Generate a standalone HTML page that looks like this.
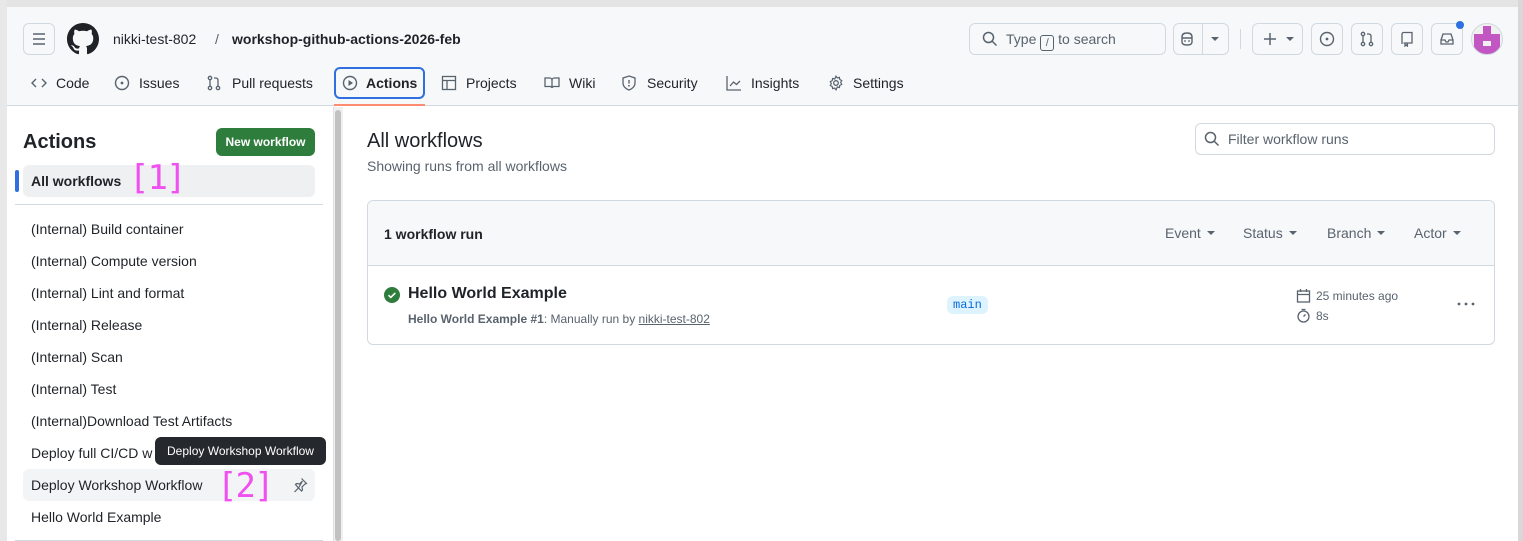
<!DOCTYPE html>
<html><head><meta charset="utf-8"><style>
*{box-sizing:border-box;margin:0;padding:0}
body{width:1523px;height:541px;overflow:hidden;background:#fff;font-family:"Liberation Sans",sans-serif;color:#1f2328;position:relative;font-size:14px}
.a{position:absolute;white-space:nowrap}
.btn{position:absolute;border:1px solid #d1d9e0;border-radius:6px;background:#f6f8fa}
svg{display:block}
.nav{position:absolute;top:75px;font-size:14px;color:#1f2328}
.wi{position:absolute;left:31px;font-size:14px;color:#1f2328}
.mag{position:absolute;color:#f050f0;font-family:"DejaVu Sans Mono","Liberation Mono",monospace;font-size:34px;line-height:40px;font-weight:200;letter-spacing:-2px}
.car{display:inline-block;width:0;height:0;border-left:4px solid transparent;border-right:4px solid transparent;border-top:4px solid #59636e;vertical-align:3px;margin-left:6px}
</style></head><body>
<div class="a" style="left:0;top:0;width:1523px;height:7px;background:#e4e4e4"></div>
<div class="a" style="left:0;top:0;width:7px;height:541px;background:#e8e8e8"></div>
<div class="a" style="left:1518px;top:0;width:5px;height:541px;background:#d8d8d8"></div>
<div class="a" style="left:7px;top:7px;width:1511px;height:99px;background:#f6f8fa;border-bottom:1px solid #d1d9e0"></div>

<div class="btn" style="left:23px;top:23px;width:32px;height:32px"><svg width="30" height="30" viewBox="0 0 30 30"><path d="M9 10h12M9 15h12M9 20h12" stroke="#59636e" stroke-width="1.5"/></svg></div>
<svg class="a" style="left:67px;top:23px" width="32" height="32" viewBox="0 0 16 16"><path fill="#1f2328" d="M8 0C3.58 0 0 3.58 0 8c0 3.540 2.29 6.53 5.47 7.59.4.07.55-.17.55-.38 0-.19-.01-.82-.01-1.49-2.01.37-2.53-.49-2.690-.94-.09-.23-.48-.94-.82-1.13-.28-.15-.68-.52-.01-.53.63-.01 1.08.58 1.23.82.72 1.21 1.87.87 2.33.66.07-.52.28-.87.51-1.07-1.78-.2-3.64-.89-3.64-3.95 0-.87.31-1.59.82-2.15-.08-.2-.36-1.02.08-2.12 0 0 .67-.21 2.2.82.64-.18 1.32-.27 2-.27.68 0 1.36.09 2 .27 1.53-1.04 2.2-.82 2.2-.82.44 1.1.16 1.92.08 2.12.51.56.82 1.27.82 2.15 0 3.07-1.87 3.75-3.65 3.95.29.25.54.73.54 1.48 0 1.07-.01 1.930-.01 2.2 0 .21.15.46.55.38A8.013 8.013 0 0016 8c0-4.42-3.58-8-8-8z"/></svg>
<div class="a" style="left:113px;top:31px;font-size:14px">nikki-test-802</div>
<div class="a" style="left:215px;top:31px;font-size:14px;color:#59636e">/</div>
<div class="a" style="left:232px;top:31px;font-size:14px;font-weight:bold">workshop-github-actions-2026-feb</div>

<div class="btn" style="left:969px;top:23px;width:197px;height:32px;background:#fff0"></div>
<svg class="a" style="left:982px;top:31px" width="16" height="16" viewBox="0 0 16 16"><circle cx="6.5" cy="6.5" r="5" fill="none" stroke="#59636e" stroke-width="1.5"/><path d="M10 10l4.5 4.5" stroke="#59636e" stroke-width="1.5"/></svg>
<div class="a" style="left:1006px;top:31px;color:#59636e">Type <span style="display:inline-block;border:1px solid #59636e;border-radius:3px;width:14px;height:16px;font-size:11px;text-align:center;line-height:14px;vertical-align:-2px">/</span> to search</div>
<div class="btn" style="left:1173px;top:23px;width:56px;height:32px;background:#fff0"></div>
<div class="a" style="left:1202px;top:23px;width:1px;height:32px;background:#d1d9e0"></div>
<svg class="a" style="left:1179px;top:31px" width="16" height="16" viewBox="0 0 16 16"><path d="M3 6c0-3 2-4 5-4s5 1 5 4v5c0 2-2 3-5 3s-5-1-5-3z M3 7h10" fill="none" stroke="#59636e" stroke-width="1.4"/><circle cx="6" cy="10" r=".9" fill="#59636e"/><circle cx="10" cy="10" r=".9" fill="#59636e"/></svg>
<svg class="a" style="left:1211px;top:37px" width="8" height="5"><path d="M0 0h8L4 4z" fill="#59636e"/></svg>
<div class="a" style="left:1240px;top:29px;width:1px;height:20px;background:#d1d9e0"></div>
<div class="btn" style="left:1252px;top:23px;width:51px;height:32px;background:#fff0"></div>
<svg class="a" style="left:1262px;top:31px" width="16" height="16"><path d="M8 2v12M2 8h12" stroke="#59636e" stroke-width="1.5"/></svg>
<svg class="a" style="left:1286px;top:37px" width="8" height="5"><path d="M0 0h8L4 4z" fill="#59636e"/></svg>
<div class="btn" style="left:1311px;top:23px;width:32px;height:32px;background:#fff0"><svg style="margin:7px" width="16" height="16"><circle cx="8" cy="8" r="6.5" fill="none" stroke="#59636e" stroke-width="1.4"/><circle cx="8" cy="8" r="1.4" fill="#59636e"/></svg></div>
<div class="btn" style="left:1351px;top:23px;width:32px;height:32px;background:#fff0"><svg style="margin:7px" width="16" height="16"><circle cx="4" cy="3" r="1.7" fill="none" stroke="#59636e" stroke-width="1.3"/><circle cx="4" cy="13" r="1.7" fill="none" stroke="#59636e" stroke-width="1.3"/><circle cx="12" cy="13" r="1.7" fill="none" stroke="#59636e" stroke-width="1.3"/><path d="M4 5v6M12 11V5c0-1-1-2-2-2H8" fill="none" stroke="#59636e" stroke-width="1.3"/></svg></div>
<div class="btn" style="left:1391px;top:23px;width:32px;height:32px;background:#fff0"><svg style="margin:7px" width="16" height="16"><path d="M3 13V3c0-1 1-1.5 1.5-1.5H13V12H4.5M6 12v3l1.2-1 1.2 1v-3" fill="none" stroke="#59636e" stroke-width="1.3"/></svg></div>
<div class="btn" style="left:1431px;top:23px;width:32px;height:32px;background:#fff0"><svg style="margin:7px" width="16" height="16"><path d="M2 9l2-6h8l2 6v4H2zM2 9h4l1 2h2l1-2h4" fill="none" stroke="#59636e" stroke-width="1.3"/></svg></div>
<div class="a" style="left:1456px;top:21px;width:8px;height:8px;border-radius:50%;background:#2f6fdf"></div>
<svg class="a" style="left:1471px;top:23px" width="32" height="32" viewBox="0 0 32 32"><clipPath id="c"><circle cx="16" cy="16" r="15.5"/></clipPath><g clip-path="url(#c)"><rect width="32" height="32" fill="#f0f0f0"/><rect x="12" y="3" width="8" height="8" fill="#c256c2"/><rect x="3" y="11" width="26" height="7" fill="#c256c2"/><rect x="3" y="18" width="9" height="5" fill="#c256c2"/><rect x="20" y="18" width="9" height="5" fill="#c256c2"/><rect x="3" y="23" width="26" height="8" fill="#c256c2"/></g><circle cx="16" cy="16" r="15.5" fill="none" stroke="#d1d9e0"/></svg>

<!-- nav -->
<svg class="a" style="left:31px;top:75px" width="16" height="16"><path d="M5 4L1 8l4 4M11 4l4 4-4 4" fill="none" stroke="#59636e" stroke-width="1.4"/></svg>
<div class="nav" style="left:56px">Code</div>
<svg class="a" style="left:114px;top:75px" width="16" height="16"><circle cx="8" cy="8" r="6.5" fill="none" stroke="#59636e" stroke-width="1.4"/><circle cx="8" cy="8" r="1.4" fill="#59636e"/></svg>
<div class="nav" style="left:139px">Issues</div>
<svg class="a" style="left:206px;top:75px" width="16" height="16"><circle cx="4" cy="3" r="1.7" fill="none" stroke="#59636e" stroke-width="1.3"/><circle cx="4" cy="13" r="1.7" fill="none" stroke="#59636e" stroke-width="1.3"/><circle cx="12" cy="13" r="1.7" fill="none" stroke="#59636e" stroke-width="1.3"/><path d="M4 5v6M12 11V5c0-1-1-2-2-2H8" fill="none" stroke="#59636e" stroke-width="1.3"/></svg>
<div class="nav" style="left:232px">Pull requests</div>
<div class="a" style="left:334px;top:67px;width:91px;height:32px;border:2px solid #2f6fdf;border-radius:6px"></div>
<div class="a" style="left:334px;top:104px;width:91px;height:2px;background:#fd8c73"></div>
<svg class="a" style="left:342px;top:75px" width="16" height="16"><circle cx="8" cy="8" r="6.5" fill="none" stroke="#59636e" stroke-width="1.4"/><path d="M6.5 5v6l4.5-3z" fill="#59636e"/></svg>
<div class="nav" style="left:366px;font-weight:bold">Actions</div>
<svg class="a" style="left:441px;top:75px" width="16" height="16"><rect x="1.5" y="1.5" width="13" height="13" fill="none" stroke="#59636e" stroke-width="1.3"/><path d="M1.5 5.5h13M6 5.5v9" stroke="#59636e" stroke-width="1.3"/></svg>
<div class="nav" style="left:466px">Projects</div>
<svg class="a" style="left:544px;top:75px" width="16" height="16"><path d="M1 3h4.5c1.5 0 2.5 1 2.5 2v8c0-1-1-1.5-2-1.5H1zM15 3h-4.5C9 3 8 4 8 5v8c0-1 1-1.5 2-1.5h5z" fill="none" stroke="#59636e" stroke-width="1.3"/></svg>
<div class="nav" style="left:569px">Wiki</div>
<svg class="a" style="left:621px;top:75px" width="16" height="16"><path d="M8 1l6 2v5c0 3.5-3 6-6 7-3-1-6-3.5-6-7V3z" fill="none" stroke="#59636e" stroke-width="1.3"/><path d="M8 5v3.5" stroke="#59636e" stroke-width="1.4"/><circle cx="8" cy="10.8" r=".9" fill="#59636e"/></svg>
<div class="nav" style="left:647px">Security</div>
<svg class="a" style="left:726px;top:75px" width="16" height="16"><path d="M1 1v14h14M4 11l3.5-4 3 2.5L14 6" fill="none" stroke="#59636e" stroke-width="1.3"/></svg>
<div class="nav" style="left:751px">Insights</div>
<svg class="a" style="left:828px;top:75px" width="16" height="16"><circle cx="8" cy="8" r="2.3" fill="none" stroke="#59636e" stroke-width="1.3"/><path d="M8 1.2l1.3 1.7 2.1-.5.4 2.1 1.9 1-1 1.9 1 2-1.9 1-.4 2.1-2.1-.5L8 14.8l-1.3-1.7-2.1.5-.4-2.1-1.9-1 1-2-1-1.9 1.9-1 .4-2.1 2.1.5z" fill="none" stroke="#59636e" stroke-width="1.2"/></svg>
<div class="nav" style="left:853px">Settings</div>

<!-- sidebar -->
<div class="a" style="left:333px;top:107px;width:10px;height:434px;background:#f0f0f0;border-left:1px solid #e0e0e0"></div>
<div class="a" style="left:335px;top:110px;width:6px;height:431px;background:#c2c2c2;border-radius:3px"></div>
<div class="a" style="left:23px;top:131px;font-size:20px;font-weight:bold">Actions</div>
<div class="a" style="left:216px;top:128px;width:99px;height:28px;background:#2f7d3c;border-radius:6px;color:#fff;font-size:12px;font-weight:bold;text-align:center;line-height:28px">New workflow</div>
<div class="a" style="left:23px;top:165px;width:292px;height:32px;background:#eef0f2;border-radius:6px"></div>
<div class="a" style="left:15px;top:170px;width:4px;height:22px;background:#2f6fdf;border-radius:2px"></div>
<div class="a" style="left:31px;top:173px;font-weight:bold">All workflows</div>
<div class="mag" style="left:129px;top:158px">[1]</div>
<div class="a" style="left:15px;top:204px;width:308px;height:1px;background:#d1d9e0"></div>
<div class="wi" style="top:221px">(Internal) Build container</div>
<div class="wi" style="top:253px">(Internal) Compute version</div>
<div class="wi" style="top:285px">(Internal) Lint and format</div>
<div class="wi" style="top:317px">(Internal) Release</div>
<div class="wi" style="top:349px">(Internal) Scan</div>
<div class="wi" style="top:381px">(Internal) Test</div>
<div class="wi" style="top:413px">(Internal)Download Test Artifacts</div>
<div class="wi" style="top:445px">Deploy full CI/CD w</div>
<div class="a" style="left:155px;top:437px;width:171px;height:28px;background:#25292e;border-radius:6px;color:#fff;font-size:12px;line-height:28px;text-align:center">Deploy Workshop Workflow</div>
<div class="a" style="left:23px;top:469px;width:292px;height:32px;background:#f3f4f6;border-radius:6px"></div>
<div class="wi" style="top:477px">Deploy Workshop Workflow</div>
<div class="mag" style="left:217px;top:466px">[2]</div>
<svg class="a" style="left:292px;top:477px" width="16" height="16"><path d="M9.5 1.5l5 5-1.5.5-3 3 .5 3-1 1-3-3-4 4m4-4L3.5 7.5l1-1 3 .5 3-3z" fill="none" stroke="#59636e" stroke-width="1.2"/></svg>
<div class="wi" style="top:509px">Hello World Example</div>
<div class="a" style="left:15px;top:540px;width:308px;height:1px;background:#d1d9e0"></div>

<!-- main -->
<div class="a" style="left:367px;top:130px;font-size:20px">All workflows</div>
<div class="a" style="left:367px;top:158px;color:#59636e">Showing runs from all workflows</div>
<div class="a" style="left:1195px;top:123px;width:300px;height:32px;border:1px solid #d1d9e0;border-radius:6px"></div>
<svg class="a" style="left:1204px;top:131px" width="16" height="16"><circle cx="6.5" cy="6.5" r="5" fill="none" stroke="#59636e" stroke-width="1.5"/><path d="M10 10l4.5 4.5" stroke="#59636e" stroke-width="1.5"/></svg>
<div class="a" style="left:1228px;top:131px;color:#59636e">Filter workflow runs</div>

<div class="a" style="left:367px;top:200px;width:1128px;height:145px;border:1px solid #d1d9e0;border-radius:6px;overflow:hidden">
 <div style="height:65px;background:#f6f8fa;border-bottom:1px solid #d1d9e0"></div>
</div>
<div class="a" style="left:384px;top:226px;font-weight:bold">1 workflow run</div>
<div class="a" style="left:1165px;top:225px;color:#59636e">Event<span class="car"></span></div>
<div class="a" style="left:1243px;top:225px;color:#59636e">Status<span class="car"></span></div>
<div class="a" style="left:1327px;top:225px;color:#59636e">Branch<span class="car"></span></div>
<div class="a" style="left:1414px;top:225px;color:#59636e">Actor<span class="car"></span></div>
<svg class="a" style="left:384px;top:287px" width="16" height="16"><circle cx="8" cy="8" r="8" fill="#2f7d3c"/><path d="M4.5 8.2l2.3 2.2 4.5-4.5" fill="none" stroke="#fff" stroke-width="1.6"/></svg>
<div class="a" style="left:408px;top:285px;font-size:16px;font-weight:bold">Hello World Example</div>
<div class="a" style="left:408px;top:312px;font-size:12px;color:#59636e"><b>Hello World Example #1</b>: Manually run by <span style="text-decoration:underline">nikki-test-802</span></div>
<div class="a" style="left:947px;top:296px;height:18px;padding:0 6px;background:#ddf4ff;border-radius:6px;color:#0969da;font-family:'Liberation Mono',monospace;font-size:12px;line-height:18px">main</div>
<svg class="a" style="left:1296px;top:288px" width="15" height="15"><rect x="1.5" y="3" width="12" height="11" fill="none" stroke="#59636e" stroke-width="1.3"/><path d="M1.5 6.5h12M4.5 1v3M10.5 1v3" stroke="#59636e" stroke-width="1.3"/></svg>
<div class="a" style="left:1316px;top:289px;font-size:12px;color:#59636e">25 minutes ago</div>
<svg class="a" style="left:1296px;top:308px" width="15" height="15"><circle cx="7.5" cy="8.5" r="5.5" fill="none" stroke="#59636e" stroke-width="1.3"/><path d="M5.5 1.5h4M7.5 8.5l2-2" stroke="#59636e" stroke-width="1.3"/></svg>
<div class="a" style="left:1316px;top:309px;font-size:12px;color:#59636e">8s</div>
<svg class="a" style="left:1457px;top:302px" width="18" height="4"><circle cx="2" cy="2" r="1.4" fill="#59636e"/><circle cx="9" cy="2" r="1.4" fill="#59636e"/><circle cx="16" cy="2" r="1.4" fill="#59636e"/></svg>
</body></html>
